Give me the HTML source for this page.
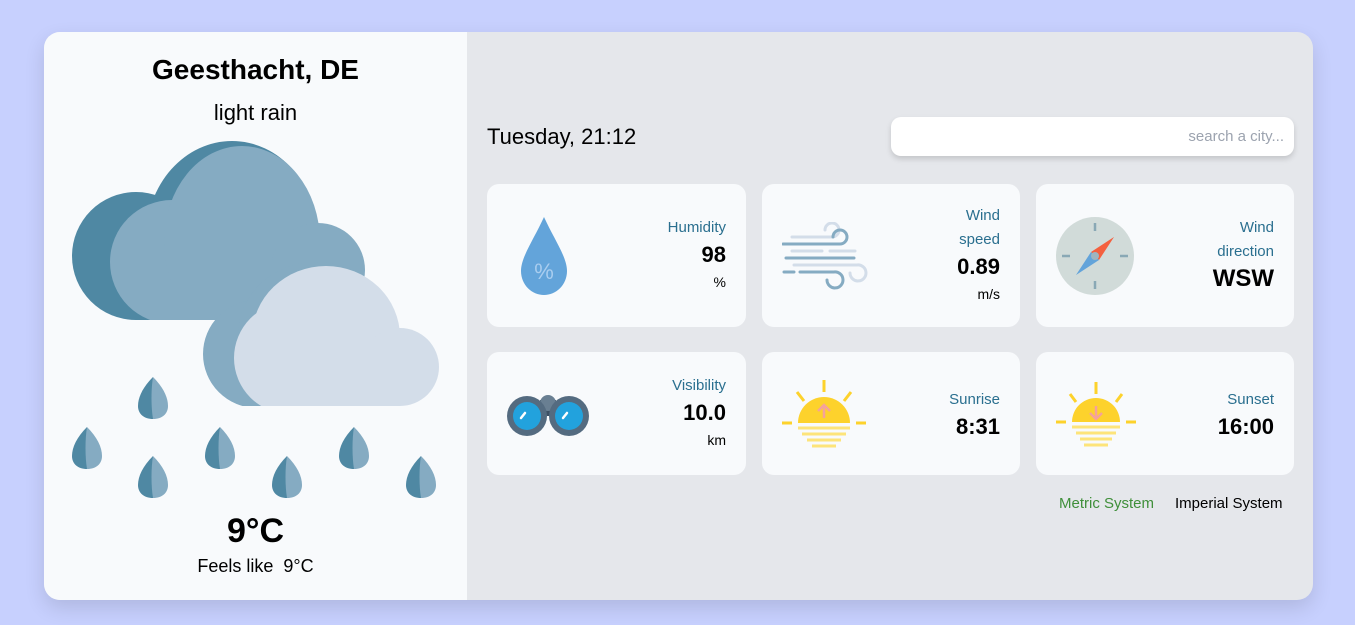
<!DOCTYPE html>
<html><head><meta charset="utf-8"><style>
*{margin:0;padding:0;box-sizing:border-box}
body{width:1355px;height:625px;background:#c7d0fe;font-family:"Liberation Sans",sans-serif;position:relative;overflow:hidden}
.main{position:absolute;left:44px;top:32px;width:1269px;height:568px;border-radius:16px;background:#e5e7eb;overflow:hidden;box-shadow:0 8px 20px rgba(0,0,0,.12)}
.left{position:absolute;left:0;top:0;width:423px;height:568px;background:#f8fafc}
.abs{position:absolute}
.c{position:absolute;text-align:center;width:423px;left:0;color:#000}
.card{position:absolute;background:#f8fafc;border-radius:12px}
.t{position:absolute;right:20px;text-align:right}
.lab{color:#2a6f8f;font-size:15px;line-height:24px}
.val{font-weight:bold;font-size:22px;color:#000;line-height:30px}
.unit{font-size:14px;color:#000;line-height:24px}
</style></head><body>
<div class="main">
<div class="left">
<div class="c" style="top:22px;font-size:28px;font-weight:bold">Geesthacht, DE</div>
<div class="c" style="top:68px;font-size:22px">light rain</div>
<svg class="abs" style="left:0;top:0" width="423" height="568">
<defs>
<clipPath id="cb"><rect x="0" y="0" width="500" height="320"/></clipPath>
<clipPath id="cs"><rect x="0" y="0" width="500" height="406"/></clipPath>
</defs>
<g transform="translate(-44,-32)">
<g clip-path="url(#cb)">
<g fill="#4f88a3">
<circle cx="136" cy="256" r="64"/><ellipse cx="232" cy="238" rx="86" ry="97"/><rect x="136" y="250" width="180" height="70"/>
</g>
<g fill="#85abc2">
<circle cx="172" cy="262" r="62"/><ellipse cx="242" cy="242" rx="78" ry="96"/><circle cx="318" cy="270" r="47"/><rect x="172" y="260" width="150" height="60"/>
</g>
</g>
<g clip-path="url(#cs)">
<g fill="#85abc2">
<circle cx="257" cy="354" r="54"/><ellipse cx="316" cy="335" rx="78" ry="73"/><rect x="257" y="340" width="80" height="66"/>
</g>
<g fill="#d3dde9">
<circle cx="290" cy="358" r="56"/><ellipse cx="326" cy="337" rx="74" ry="71"/><circle cx="400" cy="367" r="39"/><rect x="290" y="340" width="110" height="66"/>
</g>
</g>
<g id="d">
<path d="M15 0 C5 10 0 20 0 29 C0 37 6 42 15 42 L15 0Z" fill="#4f88a3"/>
<path d="M15 0 C25 10 30 20 30 29 C30 37 24 42 15 42 C13 30 13 12 15 0Z" fill="#85abc2"/>
</g>
<use href="#d" transform="translate(138,377)"/>
<use href="#d" transform="translate(72,427)"/>
<use href="#d" transform="translate(205,427)"/>
<use href="#d" transform="translate(339,427)"/>
<use href="#d" transform="translate(138,456)"/>
<use href="#d" transform="translate(272,456)"/>
<use href="#d" transform="translate(406,456)"/>
</g>
</svg>
<div class="c" style="top:480px;font-size:34px;font-weight:bold">9°C</div>
<div class="c" style="top:524px;font-size:18px">Feels like &nbsp;9°C</div>
</div>
<div class="abs" style="left:443px;top:92px;font-size:22px;color:#000">Tuesday, 21:12</div>
<div class="abs" style="left:847px;top:85px;width:403px;height:39px;background:#fff;border-radius:10px;box-shadow:0 3px 6px rgba(0,0,0,.15);text-align:right;padding-right:10px;line-height:39px;font-size:15px;color:#9ca3af">search a city...</div>

<div class="card" style="left:443px;top:152px;width:259px;height:143px">
<svg class="abs" style="left:32px;top:33px" width="50" height="78"><path d="M25 0 C15 22 2 40 2 54 C2 68 13 78 25 78 C37 78 48 68 48 54 C48 40 35 22 25 0Z" fill="#63a4da"/><text x="25" y="62" text-anchor="middle" font-size="22" fill="#a9cdef" font-family="Liberation Sans">%</text></svg>
<div class="t" style="top:32px"><div class="lab">Humidity</div><div class="val">98</div><div class="unit">%</div></div></div>

<div class="card" style="left:718px;top:152px;width:258px;height:143px">
<svg class="abs" style="left:20px;top:38px" width="90" height="70" fill="none" stroke-linecap="round" stroke-width="3">
<path d="M10 15 H50 A7 7 0 1 0 43 8" stroke="#d3dde9"/><path d="M1 22 H58 A7 7 0 1 0 51 15" stroke="#85abc2"/>
<path d="M10 29 H40 M48 29 H73" stroke="#d3dde9"/><path d="M4 36 H72" stroke="#85abc2"/>
<path d="M12 43 H75 A8 8 0 1 1 68 51" stroke="#d3dde9"/><path d="M2 50 H12 M18 50 H52 A8 8 0 1 1 45 58" stroke="#85abc2"/>
</svg>
<div class="t" style="top:20px"><div class="lab">Wind</div><div class="lab">speed</div><div class="val">0.89</div><div class="unit">m/s</div></div></div>

<div class="card" style="left:992px;top:152px;width:258px;height:143px">
<svg class="abs" style="left:20px;top:33px" width="78" height="78"><circle cx="39" cy="39" r="39" fill="#d1dbd9"/><g stroke="#89a8b5" stroke-width="2.5"><path d="M39 6V14M39 64V72M6 39H14M64 39H72"/></g><path d="M58 20 L43 43 L35 35Z" fill="#f4603f"/><path d="M20 58 L35 35 L43 43Z" fill="#63a4da"/><circle cx="39" cy="39" r="4" fill="#9fb5bf"/></svg>
<div class="t" style="top:32px"><div class="lab">Wind</div><div class="lab">direction</div><div class="val" style="font-size:24px">WSW</div></div></div>

<div class="card" style="left:443px;top:320px;width:259px;height:123px">
<svg class="abs" style="left:20px;top:42px" width="82" height="42"><rect x="33" y="6" width="16" height="16" fill="#3d5064"/><circle cx="41" cy="9" r="8" fill="#697f92"/><circle cx="20" cy="22" r="20" fill="#546b80"/><circle cx="62" cy="22" r="20" fill="#546b80"/><circle cx="20" cy="22" r="14" fill="#22a2dd"/><circle cx="62" cy="22" r="14" fill="#22a2dd"/><path d="M14 24 L18 19M56 24 L60 19" stroke="#fff" stroke-width="2.5" stroke-linecap="round"/></svg>
<div class="t" style="top:22px"><div class="lab">Visibility</div><div class="val">10.0</div><div class="unit">km</div></div></div>

<div class="card" style="left:718px;top:320px;width:258px;height:123px">
<svg class="abs" style="left:20px;top:28px" width="84" height="70"><g stroke="#fdd22c" stroke-width="3"><path d="M42 0V12M15 12L22 21M69 12L62 21M0 43H10M74 43H84"/></g><path d="M16 43 A26 26 0 0 1 68 43Z" fill="#fdd22c"/><path d="M42 38V26M36 31L42 25L48 31" stroke="#f5a29a" stroke-width="2.5" fill="none"/><g stroke="#fde47a" stroke-width="3"><path d="M16 48H68M20 54H64M25 60H59M30 66H54"/></g></svg>
<div class="t" style="top:36px"><div class="lab">Sunrise</div><div class="val">8:31</div></div></div>

<div class="card" style="left:992px;top:320px;width:258px;height:123px">
<svg class="abs" style="left:20px;top:30px" width="80" height="66"><g stroke="#fdd22c" stroke-width="3"><path d="M40 0V12M14 12L20 20M66 12L60 20M0 40H10M70 40H80"/></g><path d="M16 40 A24 24 0 0 1 64 40Z" fill="#fdd22c"/><path d="M40 24V36M34 31L40 37L46 31" stroke="#f5a29a" stroke-width="2.5" fill="none"/><g stroke="#fde47a" stroke-width="3"><path d="M16 45H64M20 51H60M24 57H56M28 63H52"/></g></svg>
<div class="t" style="top:36px"><div class="lab">Sunset</div><div class="val">16:00</div></div></div>

<div class="abs" style="left:1015px;top:463px;font-size:15px;color:#3f8f3a">Metric System</div>
<div class="abs" style="left:1131px;top:463px;font-size:15px;color:#000">Imperial System</div>
</div>
</body></html>
